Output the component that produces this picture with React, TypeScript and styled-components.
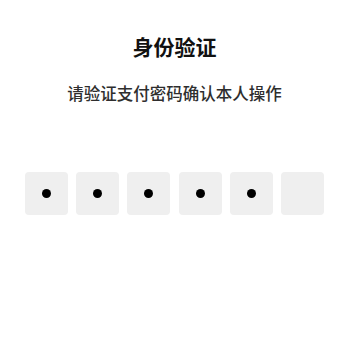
import React from 'react';
import styled, { createGlobalStyle } from 'styled-components';

const GlobalStyle = createGlobalStyle`
  html, body {
    margin: 0;
    padding: 0;
    background: #fff;
  }
  body {
    font-family: "Noto Sans CJK SC", "Noto Sans", sans-serif;
  }
`;

const Page = styled.div`
  width: 349px;
  height: 353px;
  display: flex;
  flex-direction: column;
  align-items: center;
  background: #fff;
`;

const Title = styled.h1`
  margin: 36px 0 0;
  font-size: 21px;
  line-height: 21px;
  font-weight: 700;
  color: #111;
`;

const Subtitle = styled.p`
  margin: 28px 0 0;
  font-size: 16.5px;
  line-height: 17px;
  font-weight: 500;
  color: #2e2e2e;
`;

const CodeRow = styled.div`
  margin-top: 69.5px;
  width: 300px;
  display: grid;
  grid-template-columns: repeat(6, 43px);
  justify-content: space-between;
`;

const Cell = styled.div`
  height: 43px;
  border-radius: 4px;
  background: #efefef;
  display: flex;
  align-items: center;
  justify-content: center;
`;

const Dot = styled.span`
  width: 9px;
  height: 9px;
  border-radius: 50%;
  background: #000;
`;

const App: React.FC = () => {
  const length = 6;
  const filled = 5;

  return (
    <Page>
      <GlobalStyle />
      <Title>身份验证</Title>
      <Subtitle>请验证支付密码确认本人操作</Subtitle>
      <CodeRow>
        {Array.from({ length }).map((_, i) => (
          <Cell key={i}>{i < filled && <Dot />}</Cell>
        ))}
      </CodeRow>
    </Page>
  );
};

export default App;
